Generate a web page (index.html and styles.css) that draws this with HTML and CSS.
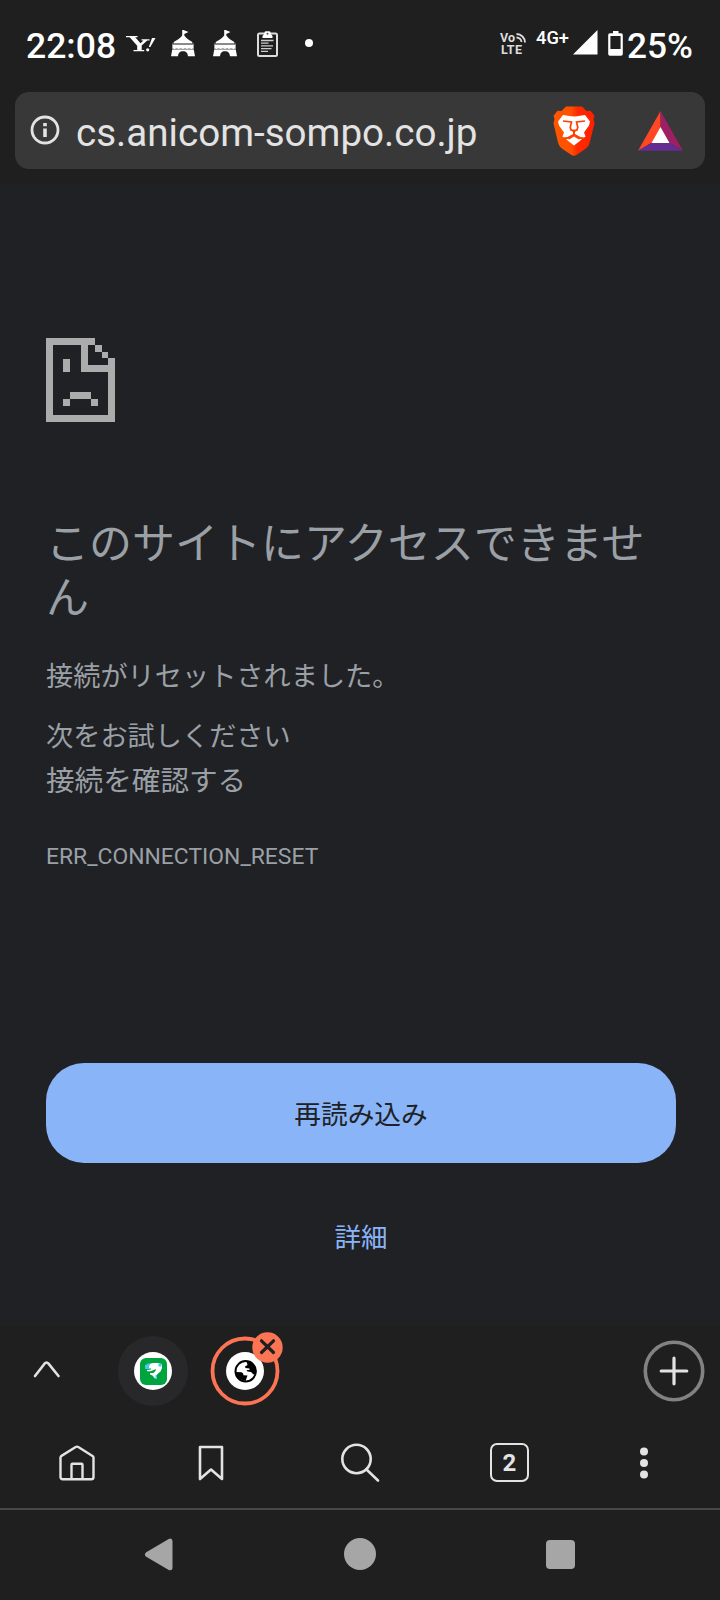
FILE: index.html
```html
<!DOCTYPE html>
<html lang="ja">
<head>
<meta charset="utf-8">
<title>cs.anicom-sompo.co.jp</title>
<link rel="stylesheet" href="styles.css">
</head>
<body>
<svg class="defs" width="0" height="0">
  <symbol id="tent" viewBox="0 0 24 27">
    <path d="M11.200 0h1.300l5 2-4.200 2v1.600c1.500 2.500 4.700 4.600 8 6.400v1.500H2.700v-1.500c3.300-1.800 7-3.900 8.500-6.400z" fill="#fff"/>
    <path d="M1 13.500h22V15H1z" fill="#888"/>
    <path d="M1.400 15h21.200v4.500H1.400z" fill="#fff"/>
    <path d="M1.400 18.500l2.100 1 2.100-1 2.100 1 2.100-1 2.100 1 2.100-1 2.100 1 2.100-1 2.100 1 2.100-1" stroke="#777" stroke-width=".8" fill="none"/>
    <path d="M1.200 19.800h21.600l1.200 6.400h-7c-.5-3.500-1.600-5-5-5s-4.500 1.500-5 5H0z" fill="#fff"/>
  </symbol>
</svg>
<div class="phone">
  <header class="status">
    <span class="clock">22:08</span>
    <svg class="yahoo" width="30" height="17" viewBox="0 0 30 17" fill="#fff"><path d="M0 0h11.500v1.200H9.200l5.300 6 3-2.800h-2V3.200h8v1.200h-2.300l-5.500 5V14h2.500v1.300H7.500V14h3.700V9.800L3.700 1.200H0z"/><path d="M26 2h3.500L24.300 11h-1.500z"/><circle cx="21.700" cy="13.800" r="1.600"/></svg>
    <svg class="tent" width="24" height="27"><use href="#tent"/></svg>
    <svg class="tent tent-second" width="24" height="27"><use href="#tent"/></svg>
    <svg class="clipboard" width="21" height="27" viewBox="0 0 21 27"><rect x="1" y="2.500" width="19" height="22.500" rx="1.500" fill="none" stroke="#ddd" stroke-width="2"/><path d="M7.500 2.500V1.500Q7.500.2 9 .2h3q1.500 0 1.500 1.300v1l2 2.500v2h-10V5z" fill="#fff"/><circle cx="10.500" cy="2.800" r="1" fill="#555"/><path d="M4 9.500h12.500M4 12.200h7.500M4 14.900h12M4 17.600h10.500M4 20.300h7" stroke="#ccc" stroke-width="1.300"/></svg>
    <span class="more-dot"></span>
    <svg class="volte" width="29" height="32" viewBox="-2 -5 29 32"><text x="0" y="9.500" class="volte-text" textLength="15">Vo</text><text x="1" y="22.300" class="volte-text" textLength="21">LTE</text><path d="M16.500 5.500a5 5 0 0 1 5 4.500M16.500 2a8.500 8.500 0 0 1 8.500 8.500" fill="none" stroke="#ddd" stroke-width="1.800"/></svg>
    <span class="network">4G+</span>
    <svg class="signal" width="25" height="25" viewBox="0 0 25 25"><path d="M24.500 0v24.500H0z" fill="#fff"/></svg>
    <svg class="battery" width="15" height="25" viewBox="0 0 15 25"><path d="M5 0h5.500v2.200H13a1.800 1.800 0 0 1 1.800 1.800v19a1.800 1.800 0 0 1-1.800 1.800H2A1.800 1.800 0 0 1 .2 23V4A1.800 1.800 0 0 1 2 2.200h3zM2.400 5v13h10.200V5z" fill="#fff" fill-rule="evenodd"/></svg>
    <span class="percent">25%</span>
  </header>

  <div class="address">
    <svg class="info" width="30" height="30" viewBox="0 0 30 30"><circle cx="15" cy="15" r="13" fill="none" stroke="#e3e3e3" stroke-width="2.800"/><path d="M13.200 8h3.600v3.200h-3.600zM13.200 13.500h3.600v8.500h-3.600z" fill="#e3e3e3"/></svg>
    <span class="url">cs.anicom-sompo.co.jp</span>
    <svg class="brave" width="42" height="50" viewBox="0 0 42 50">
      <defs><linearGradient id="flame"><stop offset="0" stop-color="#ff5500"/><stop offset=".44" stop-color="#ff5000"/><stop offset=".58" stop-color="#ff2a00"/><stop offset="1" stop-color="#ff2000"/></linearGradient></defs>
      <path d="M13 .5h16l4.500 4.500 4-.3 4 5-1 3.500 1 4-4.800 19.300c-1 4-3 5.500-6 7.500l-7.200 5q-2.500 1.500-5 0L11 44c-3-2-5-3.500-6-7.500L.5 17.200l1-4-1-3.500 4-5 4 .3z" fill="url(#flame)"/>
      <path d="M10 9l5 .8q6 1.200 12 0l5-.8 5 6.500-1 4-5 7 1.500 4-5.500 4-6-3.500-6 3.500-5.500-4 1.500-4L6 19.500l-1-4z" fill="#fff"/>
      <path d="M10 15l8.500 1-1.300 5.500 1.300 3.500M32 15l-8.500 1 1.300 5.500-1.300 3.500" fill="none" stroke="#ff4000" stroke-width="1.700"/>
      <path d="M17 23.500h8l-3 2.500v2.500l6 3.500-7 5-7-5 6-3.500V26z" fill="#ff4000"/>
      <path d="M21 30.500l6.500 4-6.500 5-6.500-5z" fill="#fff"/>
      <path d="M10.500 32.500l4-.5 6.500-3.500 6.500 3.500 4 .5" fill="none" stroke="#ff4000" stroke-width="1.800"/>
    </svg>
    <svg class="rewards" width="45" height="40" viewBox="0 0 45 40"><path d="M22.500 0v17L14 31.500 0 39.700z" fill="#ff4724"/><path d="M22.500 0L45 39.700l-13.500-8.200-9-14.500z" fill="#9e1f63"/><path d="M0 39.700L14 31.500h17.500L45 39.700z" fill="#662d91"/><path d="M22.500 16L31.500 32h-18z" fill="#fff"/></svg>
  </div>

  <main class="page">
    <svg class="sad" width="69" height="84" viewBox="0 0 69 84" shape-rendering="crispEdges" fill="#acacac">
      <path d="M0 0h49v7H42v20h20v-7h7v64H0zM7 7v70h55V34H35V7z" fill-rule="evenodd"/>
      <path d="M49 7h7v7h-7zM56 14h6v6h-6zM17 21h7v13h-7zM24 54h21v7H24zM17 61h7v7h-7zM45 61h7v7h-7z"/>
    </svg>
    <h1 class="title">このサイトにアクセスできません</h1>
    <p class="summary">接続がリセットされました。</p>
    <p class="try">次をお試しください</p>
    <p class="tip">接続を確認する</p>
    <p class="code">ERR_CONNECTION_RESET</p>
    <button class="reload">再読み込み</button>
    <button class="details">詳細</button>
  </main>

  <section class="tabs">
    <svg class="chevron" width="28" height="18" viewBox="0 0 28 18"><path d="M2 16L11.500 3.700q2-2.400 4 0L25.500 16" fill="none" stroke="#e3e3e3" stroke-width="2.600" stroke-linecap="round"/></svg>
    <svg class="tab" width="70" height="70" viewBox="0 0 70 70"><circle cx="35" cy="35" r="35" fill="#28282a"/><circle cx="35" cy="35" r="19" fill="#fff"/><rect x="22" y="22" width="27" height="27" rx="6" fill="#00a43e"/><path d="M27 33v-3.500l4.500-1.500 3-1h6l3.500 1.500v3.500l-1.500 3.500-3.500 3v4h-2l-2.500-3-2.500-1v-1.500h3.500l2-2 .5-2-3.500 1.500-2 .8h-3.500V34l4-.5v-1h-3z" fill="#fff"/><path d="M27 29.500l3-2h2v2h-1v3.500h-4zM40.500 27.500h3v3h-3zM37.500 39h1.500v4h-1.500z" fill="#41c9f5"/></svg>
    <div class="active-tab">
      <svg width="70" height="70" viewBox="0 0 70 70"><circle cx="35" cy="35" r="32.500" fill="none" stroke="#fb7554" stroke-width="3.800"/><circle cx="35" cy="35" r="19" fill="#fff"/><circle cx="35.700" cy="35.300" r="10.200" fill="#fff" stroke="#000" stroke-width="2"/><path d="M36.500 25l5.500 1.500 4 5.500v5.500l-2.500 1-2.500-2.500-3.500-.5-1-1.500h3v-1.500l-4-.5-.5-1.500 2.500-1.500zM25.500 36l6 .300q2 .5 2 3l4 .2-2 5.500-6-2-4-4z" fill="#000"/></svg>
      <svg class="close" width="31" height="31" viewBox="0 0 31 31"><circle cx="15.500" cy="15.500" r="15.200" fill="#fb7554"/><path d="M9.500 8.800L21.500 20.500M21.500 8.800L9.500 20.500" stroke="#1f1f1f" stroke-width="3.200" stroke-linecap="round"/></svg>
    </div>
    <svg class="add" width="62" height="62" viewBox="0 0 62 62"><circle cx="31" cy="31" r="28.700" fill="none" stroke="#828282" stroke-width="3.600"/><path d="M31 18.200v25.600M18.200 31h25.600" stroke="#e3e3e3" stroke-width="3.200" stroke-linecap="round"/></svg>
  </section>

  <nav class="toolbar">
    <svg class="home" width="36" height="36" viewBox="0 0 36 36"><path d="M1.500 12.500q0-1 1-1.600L16.700 2q1.300-.8 2.600 0l14.200 8.900q1 .6 1 1.600V32q0 2.300-2.300 2.300H3.800Q1.500 34.300 1.500 32zM12.500 34V19.700q0-.9.900-.9h9.200q.9 0 .9.900V34" fill="none" stroke="#e3e3e3" stroke-width="2.400"/></svg>
    <svg class="bookmark" width="26" height="36" viewBox="0 0 26 36"><path d="M2 2h22v32L13 24.500 2 34z" fill="none" stroke="#e3e3e3" stroke-width="2.600" stroke-linejoin="round"/></svg>
    <svg class="search" width="40" height="40" viewBox="0 0 40 40"><circle cx="16.500" cy="16" r="14.200" fill="none" stroke="#e3e3e3" stroke-width="2.600"/><path d="M26.500 26.500L38 37.500" stroke="#e3e3e3" stroke-width="2.600" stroke-linecap="round"/></svg>
    <span class="count">2</span>
    <svg class="menu" width="8" height="32" viewBox="0 0 8 32" fill="#e3e3e3"><circle cx="4" cy="4.500" r="4"/><circle cx="4" cy="16" r="4"/><circle cx="4" cy="27.500" r="4"/></svg>
  </nav>

  <footer class="system">
    <svg class="back" width="29" height="33" viewBox="0 0 29 33"><path d="M3.500 16.500L26 3.200v26.600z" fill="#a6a6a6" stroke="#a6a6a6" stroke-width="5" stroke-linejoin="round"/></svg>
    <span class="round"></span>
    <span class="square"></span>
  </footer>
</div>
</body>
</html>
```
FILE: styles.css
```css
* { box-sizing: border-box; }
body {
  margin: 0;
  background: #1f1f1f;
  font-family: Roboto, "Noto Sans CJK JP", sans-serif;
}
svg { display: block; flex: none; }
.defs { position: absolute; }
.phone {
  width: 720px;
  height: 1600px;
  overflow: hidden;
  display: flex;
  flex-direction: column;
}
h1, p { margin: 0; font-weight: 400; }
button {
  border: 0;
  padding: 0;
  background: none;
  font-family: inherit;
}

.status {
  height: 92px;
  padding: 30px 0 0 26px;
  display: flex;
  align-items: flex-start;
  color: #fff;
  font-weight: 500;
}
.clock, .percent {
  margin-top: 1px;
  font-size: 35.5px;
  line-height: 30px;
  white-space: nowrap;
}
.clock { width: 100px; }
.yahoo { margin-top: 6px; }
.tent { margin-left: 15px; }
.tent-second { margin-left: 18px; }
.clipboard { margin: 1px 0 0 20px; }
.more-dot {
  width: 8px;
  height: 8px;
  margin: 9px 0 0 27px;
  border-radius: 50%;
  background: #fff;
}
.volte {
  margin: -3px 0 0 185px;
  overflow: visible;
}
.volte-text {
  font: 700 12.5px Roboto, sans-serif;
  fill: #ddd;
}
.network {
  width: 34px;
  margin: 0 0 0 9px;
  font-size: 18.3px;
  line-height: 15px;
}
.signal { margin: 0 0 0 3px; }
.battery { margin: 1px 0 0 10px; }
.percent {
  margin-left: 4px;
  font-size: 35.2px;
}

.address {
  flex: none;
  height: 77px;
  margin: 0 15px 15px;
  padding-left: 15px;
  display: flex;
  align-items: center;
  border-radius: 14px;
  background: #383838;
}
.url {
  width: 477px;
  margin: 4px 0 0 16px;
  color: #e3e3e3;
  font-size: 38.6px;
  line-height: 48px;
  white-space: nowrap;
}
.info { margin-top: -1px; }
.brave { margin-left: 0; }
.rewards { margin: 0 0 0 43px; }

.page {
  flex: none;
  height: 1141px;
  padding: 154px 44px 0 46px;
  display: flex;
  flex-direction: column;
  background: #202124;
  color: #9aa0a6;
}
.title {
  margin-top: 95px;
  font-size: 43px;
  line-height: 54px;
}
.summary {
  margin-top: 32px;
  font-size: 27.2px;
  line-height: 40px;
}
.try {
  margin-top: 20px;
  font-size: 27.2px;
  line-height: 40px;
}
.tip {
  margin-top: 3px;
  font-size: 28.6px;
  line-height: 42px;
}
.code {
  margin-top: 40px;
  font-size: 22.9px;
  line-height: 30px;
}
.reload {
  flex: none;
  height: 100px;
  margin-top: 191px;
  padding-bottom: 2px;
  border-radius: 38px;
  background: #8ab4f8;
  color: #202124;
  font-size: 26.7px;
}
.details {
  align-self: center;
  margin-top: 55px;
  color: #8ab4f8;
  font-size: 26.5px;
  line-height: 40px;
}

.tabs {
  flex: none;
  height: 93px;
  padding-left: 33px;
  display: flex;
  align-items: flex-start;
}
.chevron { margin-top: 35px; }
.tab { margin: 11px 0 0 57px; }
.active-tab {
  position: relative;
  margin: 11px 0 0 22px;
}
.close {
  position: absolute;
  top: -4px;
  right: -3px;
}
.add { margin: 15px 15px 0 auto; }

.toolbar {
  flex: none;
  height: 92px;
  padding: 0 72px 1px 59px;
  display: flex;
  align-items: center;
  border-bottom: 2px solid #484848;
}
.bookmark { margin-left: 103px; }
.search { margin-left: 116px; }
.count {
  width: 39px;
  height: 39px;
  margin-left: 110px;
  border: 2.5px solid #e3e3e3;
  border-radius: 7px;
  color: #e3e3e3;
  font-size: 24px;
  font-weight: 700;
  line-height: 36px;
  text-align: center;
}
.menu { margin-left: auto; }

.system {
  flex: none;
  height: 90px;
  padding: 0 145px 2px 144px;
  display: flex;
  align-items: center;
  justify-content: space-between;
}
.round {
  width: 32px;
  height: 32px;
  border-radius: 50%;
  background: #a6a6a6;
}
.square {
  width: 29px;
  height: 29px;
  border-radius: 4px;
  background: #a6a6a6;
}
```
